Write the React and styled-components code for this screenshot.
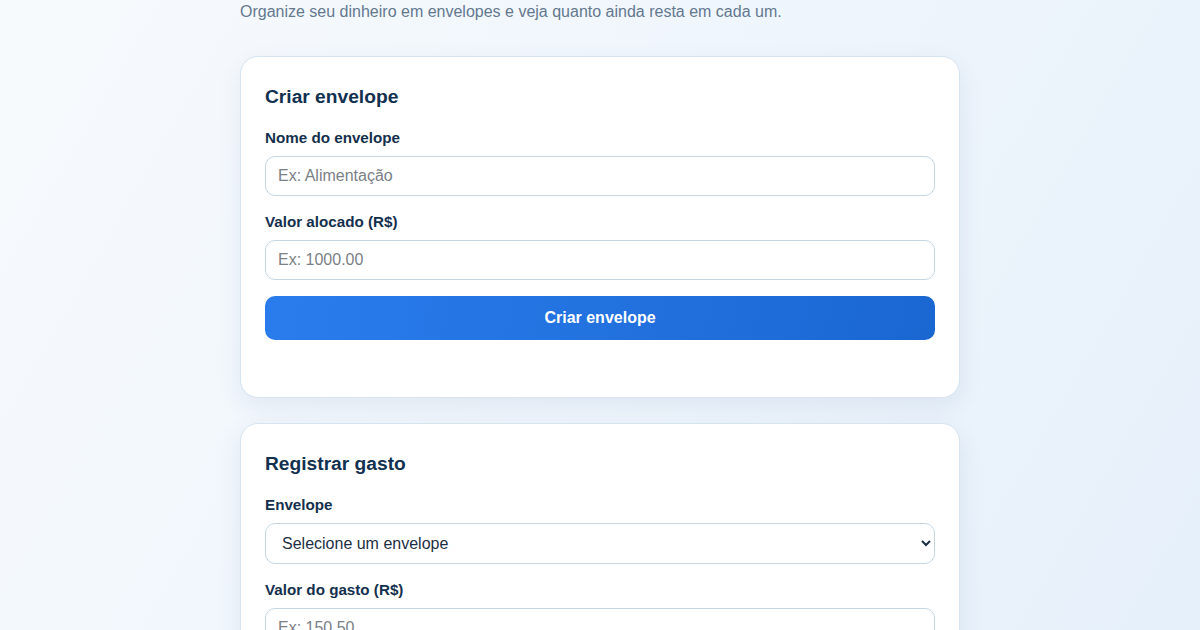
import React, { useState } from "react";
import styled, { createGlobalStyle } from "styled-components";

const GlobalStyle = createGlobalStyle`
  * { box-sizing: border-box; }
  html, body {
    margin: 0;
    padding: 0;
  }
  body {
    font-family: "Liberation Sans", Arial, sans-serif;
    background: linear-gradient(120deg, #f7fafd 0%, #eef5fc 55%, #e6f0fa 100%);
    background-attachment: fixed;
    min-height: 100vh;
    color: #0f2a47;
  }
`;

const Page = styled.main`
  width: 720px;
  margin: 0 auto;
  padding-bottom: 40px;
`;

const Subtitle = styled.p`
  margin: 0 0 32px;
  font-size: 16px;
  line-height: 24px;
  color: #64788f;
`;

const Card = styled.section`
  background: #fff;
  border: 1px solid #d6e4f0;
  border-radius: 18px;
  padding: 28px 24px 28px;
  margin-bottom: 25px;
  box-shadow: 0 8px 24px rgba(30, 70, 120, 0.08);
`;

const Title = styled.h2`
  margin: 0 0 20px;
  font-size: 19.2px;
  line-height: 24px;
  font-weight: 700;
  color: #12304f;
`;

const Field = styled.div`
  display: flex;
  flex-direction: column;
  margin-bottom: 17px;
`;

const Label = styled.label`
  font-size: 15.2px;
  line-height: 18px;
  font-weight: 700;
  color: #14304d;
  margin-bottom: 9px;
`;

const Input = styled.input`
  height: 40px;
  padding: 0 12px;
  font-family: inherit;
  font-size: 16px;
  color: #1d2f44;
  border: 1px solid #c4d6e4;
  border-radius: 10px;
  background: #fff;
  outline: none;

  &::placeholder {
    color: #7b7f86;
  }
`;

const Select = styled.select`
  height: 41px;
  padding: 0 12px;
  font-family: inherit;
  font-size: 16px;
  color: #1d2f44;
  border: 1px solid #c4d6e4;
  border-radius: 10px;
  background: #fff;
  outline: none;
`;

const Button = styled.button`
  width: 100%;
  height: 44px;
  margin-top: -1px;
  border: none;
  border-radius: 10px;
  background: linear-gradient(100deg, #2a7ced 0%, #1a67d2 100%);
  color: #fff;
  font-family: inherit;
  font-size: 16px;
  font-weight: 700;
  cursor: pointer;
`;

const Message = styled.p`
  margin: 0;
  min-height: 29px;
  font-size: 14px;
  color: #1a67d2;
`;

export default function App() {
  const [name, setName] = useState("");
  const [amount, setAmount] = useState("");
  const [envelope, setEnvelope] = useState("");
  const [spent, setSpent] = useState("");

  return (
    <>
      <GlobalStyle />
      <Page>
        <Subtitle>
          Organize seu dinheiro em envelopes e veja quanto ainda resta em cada um.
        </Subtitle>

        <Card>
          <Title>Criar envelope</Title>
          <Field>
            <Label htmlFor="nome">Nome do envelope</Label>
            <Input
              id="nome"
              type="text"
              placeholder="Ex: Alimentação"
              value={name}
              onChange={(e) => setName(e.target.value)}
            />
          </Field>
          <Field>
            <Label htmlFor="valor">Valor alocado (R$)</Label>
            <Input
              id="valor"
              type="number"
              placeholder="Ex: 1000.00"
              value={amount}
              onChange={(e) => setAmount(e.target.value)}
            />
          </Field>
          <Button type="button">Criar envelope</Button>
          <Message />
        </Card>

        <Card>
          <Title>Registrar gasto</Title>
          <Field>
            <Label htmlFor="envelope">Envelope</Label>
            <Select
              id="envelope"
              value={envelope}
              onChange={(e) => setEnvelope(e.target.value)}
            >
              <option value="">Selecione um envelope</option>
            </Select>
          </Field>
          <Field>
            <Label htmlFor="gasto">Valor do gasto (R$)</Label>
            <Input
              id="gasto"
              type="number"
              placeholder="Ex: 150.50"
              value={spent}
              onChange={(e) => setSpent(e.target.value)}
            />
          </Field>
          <Button type="button">Registrar gasto</Button>
          <Message />
        </Card>
      </Page>
    </>
  );
}
